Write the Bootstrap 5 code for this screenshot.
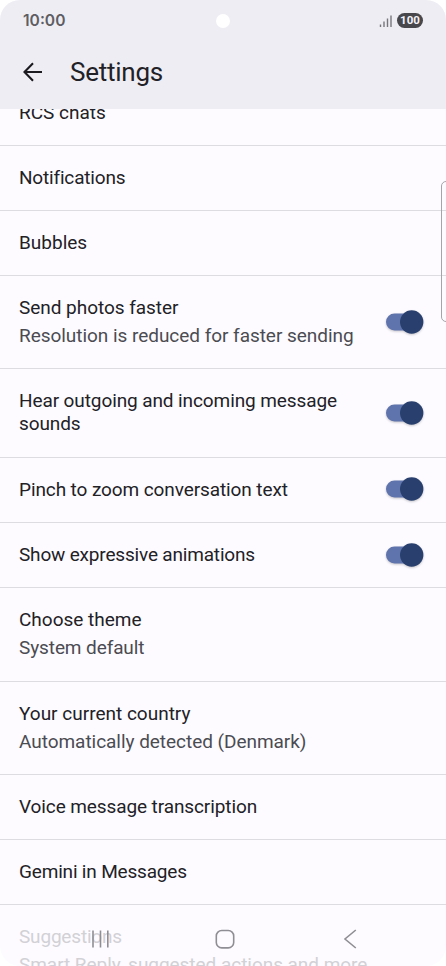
<!DOCTYPE html>
<html lang="en">
<head>
<meta charset="utf-8">
<meta name="viewport" content="width=device-width, initial-scale=1">
<title>Settings</title>
<link rel="stylesheet" href="https://cdn.jsdelivr.net/npm/bootstrap@5.3.0/dist/css/bootstrap.min.css">
<style>
body{background:#fff;font-family:Roboto,"Liberation Sans",sans-serif}
.screen{height:966px;background:#fdfbff;border-radius:20px;color:#222126}
.top-area{height:109px;background:#eeedf4;z-index:2}
.status{height:41px;padding:0 23px;color:#5e5d62}
.clock{font-family:Inter,sans-serif;font-weight:600;font-size:15.6px;line-height:20px;letter-spacing:0}
.camera{width:14px;height:14px;left:216px;top:14px}
.battery{width:26px;height:15px;background:#48474b;color:#f4f3f8;font:700 11.5px/15px Roboto,sans-serif}
.app-bar{height:62px;padding-left:22px;gap:26px}
.app-title{font-size:26px;line-height:32px;font-weight:400;letter-spacing:-.25px}
.options{margin-top:-28.5px}
.option{height:65.2px;padding:0 22px 0 19px;border-bottom:1px solid #dddce1}
.option.two{height:93.3px}
.option.wrap{height:88.7px}
.option-text{margin-top:-1.4px}
.option:first-child .option-text{margin-top:0}
.option.wrap .option-text{margin-top:-2.4px}
.label,.detail{font-size:19px;line-height:23px;white-space:nowrap}
.detail{margin-top:5px;color:#4b4b52}
.faded .label,.faded .detail{color:#d2d1d6}
.ls-1{letter-spacing:-.04px}
.ls-2{letter-spacing:-.1px}
.ls-3{letter-spacing:-.18px}
.toggle{width:38px;height:24px;margin-top:-1.400px;overflow:visible;filter:drop-shadow(0 1px 1px rgba(0,0,0,.22))}
.edge-panel{left:441px;top:181px;width:12px;height:141px;border:1px solid #a5a4a9;border-radius:5px}
.nav-keys{left:0;top:922px;width:446px;height:34px}
</style>
<script src="https://cdn.jsdelivr.net/npm/bootstrap@5.3.0/dist/js/bootstrap.bundle.min.js"></script>
</head>
<body>
<svg class="d-none"><symbol id="switch-on" viewBox="0 0 38 24"><rect x="0" y="3.500" width="34" height="17" rx="8.500" fill="#5f74ac"/><circle cx="25.700" cy="12" r="11.700" fill="#29406f"/></symbol></svg>
<main class="screen position-relative overflow-hidden">
<header class="top-area position-relative">
 <div class="status d-flex align-items-center justify-content-between">
  <span class="clock">10:00</span>
  <span class="camera position-absolute bg-white rounded-circle"></span>
  <div class="d-flex align-items-center gap-1"><svg width="14" height="14"><path d="M1.500 10.500v2.500M5 7.500v5.500M8.500 4.500v8.500M12 1.500v11.500" stroke="#77767b" stroke-width="1.400"/></svg><span class="battery rounded-pill text-center">100</span></div>
 </div>
 <div class="app-bar d-flex align-items-center">
  <svg width="22" height="22" fill="none" stroke="#1c1b20" stroke-width="2.100"><path d="M20 11H3M11 2.300 2.500 11l8.500 8.700"/></svg>
  <h1 class="app-title m-0">Settings</h1>
 </div>
</header>
<div class="options">
 <div class="option d-flex align-items-center"><div class="option-text label">RCS chats</div></div>
 <div class="option d-flex align-items-center"><div class="option-text label ls-3">Notifications</div></div>
 <div class="option d-flex align-items-center"><div class="option-text label">Bubbles</div></div>
 <div class="option two d-flex align-items-center justify-content-between"><div class="option-text"><div class="label ls-1">Send photos faster</div><div class="detail ls-1">Resolution is reduced for faster sending</div></div><svg class="toggle"><use href="#switch-on"/></svg></div>
 <div class="option wrap d-flex align-items-center justify-content-between"><div class="option-text label ls-2">Hear outgoing and incoming message<br>sounds</div><svg class="toggle"><use href="#switch-on"/></svg></div>
 <div class="option d-flex align-items-center justify-content-between"><div class="option-text label ls-2">Pinch to zoom conversation text</div><svg class="toggle"><use href="#switch-on"/></svg></div>
 <div class="option d-flex align-items-center justify-content-between"><div class="option-text label ls-3">Show expressive animations</div><svg class="toggle"><use href="#switch-on"/></svg></div>
 <div class="option two d-flex align-items-center"><div class="option-text"><div class="label">Choose theme</div><div class="detail ls-2">System default</div></div></div>
 <div class="option two d-flex align-items-center"><div class="option-text"><div class="label">Your current country</div><div class="detail ls-1">Automatically detected (Denmark)</div></div></div>
 <div class="option d-flex align-items-center"><div class="option-text label ls-2">Voice message transcription</div></div>
 <div class="option d-flex align-items-center"><div class="option-text label ls-3">Gemini in Messages</div></div>
 <div class="option two faded d-flex align-items-center"><div class="option-text"><div class="label ls-3">Suggestions</div><div class="detail ls-1">Smart Reply, suggested actions and more</div></div></div>
</div>
<div class="edge-panel position-absolute"></div>
<svg class="nav-keys position-absolute" fill="none" stroke="#8f8e94" stroke-width="1.600"><path d="M93 8.500v17M100.500 8.500v17M107.800 8.500v17"/><rect x="216.300" y="8.500" width="17.400" height="17.400" rx="5.500"/><path d="M355.800 8 345 17l10.800 9"/></svg>
</main>
</body>
</html>
